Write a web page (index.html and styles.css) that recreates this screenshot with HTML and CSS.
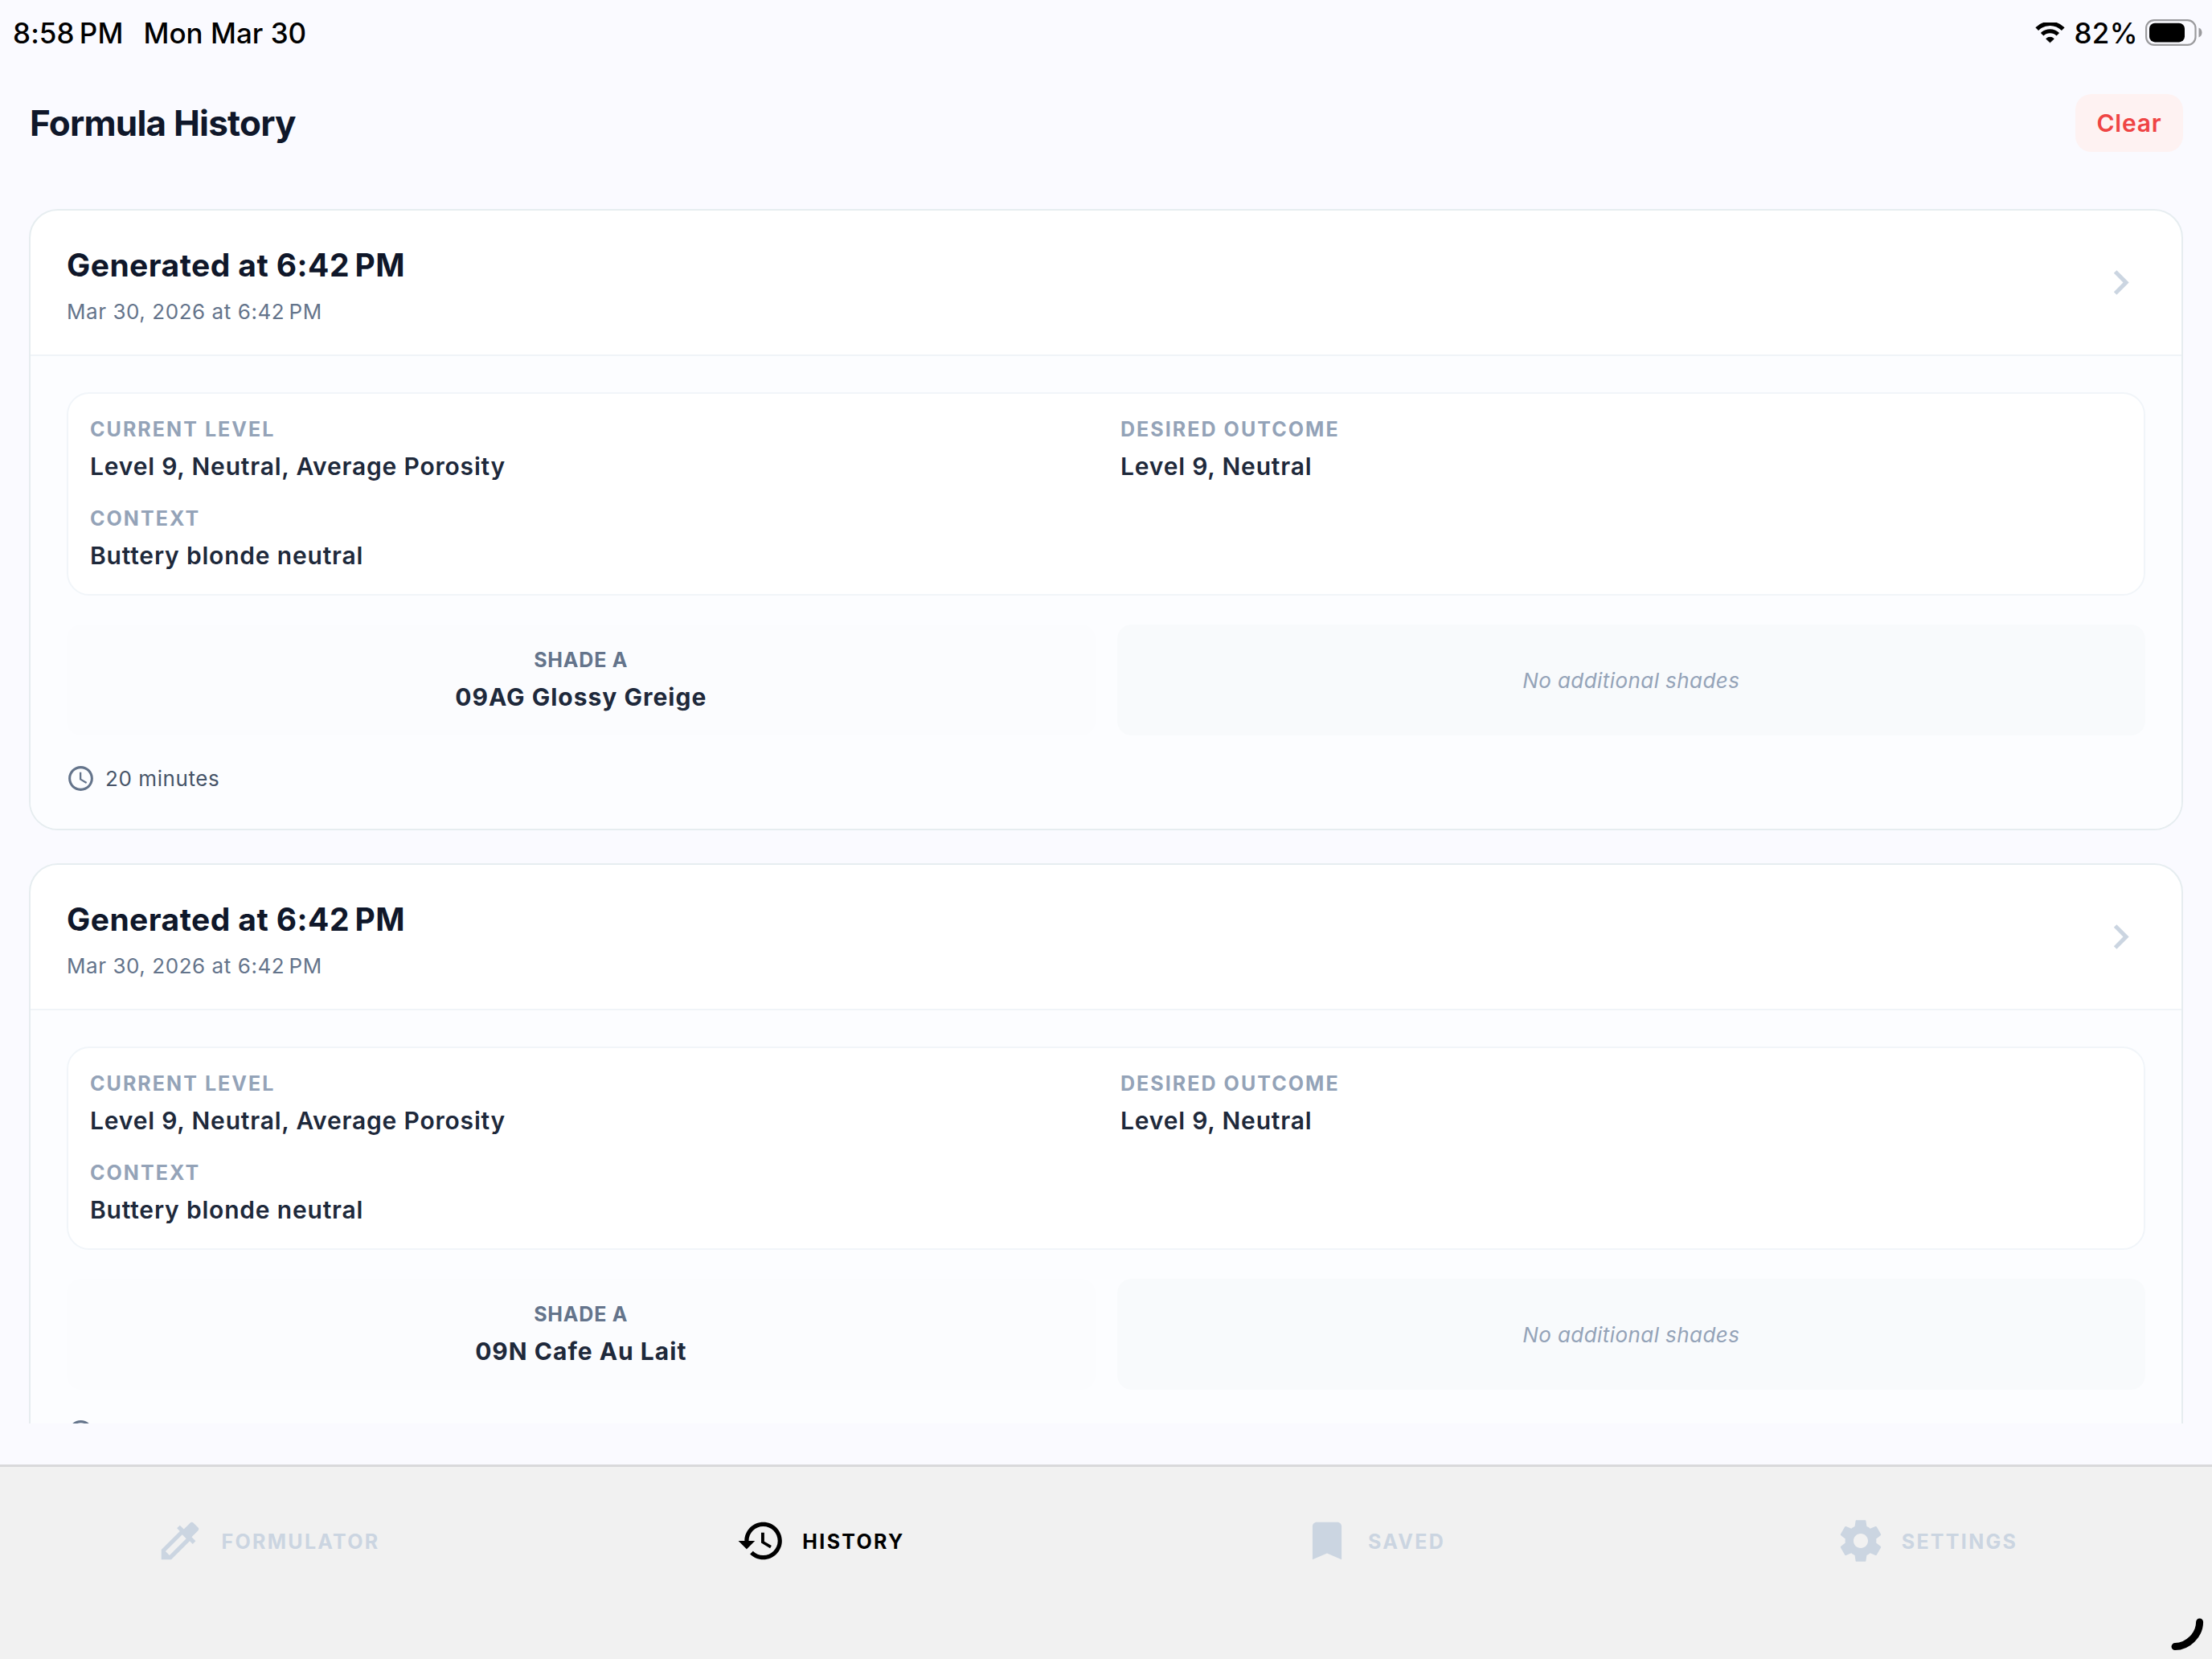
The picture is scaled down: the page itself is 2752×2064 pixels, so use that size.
FILE: index.html
```html
<!DOCTYPE html>
<html lang="en">
  <head>
    <meta charset="UTF-8" />
    <meta name="viewport" content="width=device-width, initial-scale=1.0" />
    <title>Formula History</title>
    <link rel="stylesheet" href="styles.css">
  </head>
  <body>
    <div class="status-bar">
      <div class="status-left">
        <span class="time">8:58&#8239;PM</span>
        <span>Mon Mar 30</span>
      </div>
      <div class="status-right">
        <svg class="wifi" viewBox="0 0 38 26">
          <path d="M2.2 8.1A23 23 0 0 1 34.8 8.1" fill="none" stroke="#000" stroke-width="5.2" />
          <path d="M8.7 14.8A14 14 0 0 1 28.3 14.8" fill="none" stroke="#000" stroke-width="5" />
          <path d="M18.5 24.8L13.7 20.3A6.8 6.8 0 0 1 23.3 20.3Z" stroke="#000" stroke-width="1" stroke-linejoin="round" />
        </svg>
        <span class="percent">82%</span>
        <svg class="battery" viewBox="0 0 71 33">
          <rect x="1.1" y="1.1" width="61.4" height="30.8" rx="10" fill="none" stroke="#9a9a9d" stroke-width="2.2" />
          <rect x="5" y="4.8" width="44" height="23.6" rx="7" />
          <path d="M66.5 10.5c2.6 1 4 3.2 4 6s-1.4 5-4 6z" fill="#9a9a9d" />
        </svg>
      </div>
    </div>

    <header class="page-header">
      <h1>Formula History</h1>
      <button class="clear-btn">Clear</button>
    </header>

    <main class="history-list">
      <section class="card">
        <div class="card-head">
          <div>
            <h2>Generated at 6:42&#8239;PM</h2>
            <p class="date">Mar 30, 2026 at 6:42&#8239;PM</p>
          </div>
          <svg class="chevron" viewBox="0 0 24 24"><path d="M10 6L8.59 7.41 13.17 12l-4.58 4.59L10 18l6-6z" /></svg>
        </div>
        <div class="card-body">
          <div class="info-box">
            <div>
              <div class="label">CURRENT LEVEL</div>
              <div class="value">Level 9, Neutral, Average Porosity</div>
            </div>
            <div>
              <div class="label">DESIRED OUTCOME</div>
              <div class="value">Level 9, Neutral</div>
            </div>
            <div>
              <div class="label">CONTEXT</div>
              <div class="value">Buttery blonde neutral</div>
            </div>
          </div>
          <div class="shades">
            <div class="shade">
              <div class="shade-label">SHADE A</div>
              <div class="shade-name">09AG Glossy Greige</div>
            </div>
            <div class="shade empty">No additional shades</div>
          </div>
          <div class="duration">
            <svg viewBox="0 0 24 24"><path d="M11.99 2C6.47 2 2 6.48 2 12s4.47 10 9.99 10C17.52 22 22 17.52 22 12S17.52 2 11.99 2zM12 20c-4.42 0-8-3.58-8-8s3.58-8 8-8 8 3.58 8 8-3.58 8-8 8zm.5-13H11v6l5.25 3.15.75-1.23-4.5-2.67z" /></svg>
            <span>20 minutes</span>
          </div>
        </div>
      </section>

      <section class="card">
        <div class="card-head">
          <div>
            <h2>Generated at 6:42&#8239;PM</h2>
            <p class="date">Mar 30, 2026 at 6:42&#8239;PM</p>
          </div>
          <svg class="chevron" viewBox="0 0 24 24"><path d="M10 6L8.59 7.41 13.17 12l-4.58 4.59L10 18l6-6z" /></svg>
        </div>
        <div class="card-body">
          <div class="info-box">
            <div>
              <div class="label">CURRENT LEVEL</div>
              <div class="value">Level 9, Neutral, Average Porosity</div>
            </div>
            <div>
              <div class="label">DESIRED OUTCOME</div>
              <div class="value">Level 9, Neutral</div>
            </div>
            <div>
              <div class="label">CONTEXT</div>
              <div class="value">Buttery blonde neutral</div>
            </div>
          </div>
          <div class="shades">
            <div class="shade">
              <div class="shade-label">SHADE A</div>
              <div class="shade-name">09N Cafe Au Lait</div>
            </div>
            <div class="shade empty">No additional shades</div>
          </div>
          <div class="duration">
            <svg viewBox="0 0 24 24"><path d="M11.99 2C6.47 2 2 6.48 2 12s4.47 10 9.99 10C17.52 22 22 17.52 22 12S17.52 2 11.99 2zM12 20c-4.42 0-8-3.58-8-8s3.58-8 8-8 8 3.58 8 8-3.58 8-8 8zm.5-13H11v6l5.25 3.15.75-1.23-4.5-2.67z" /></svg>
          </div>
        </div>
      </section>
    </main>

    <nav class="tab-bar">
      <a class="tab">
        <svg viewBox="0 0 24 24"><path d="M20.71 5.63l-2.34-2.34c-.39-.39-1.02-.39-1.41 0l-3.12 3.12-1.93-1.91-1.41 1.41 1.42 1.42L3 16.25V21h4.75l8.92-8.92 1.42 1.42 1.41-1.41-1.92-1.92 3.12-3.12c.4-.4.4-1.03.01-1.42zM6.92 19L5 17.08l8.06-8.06 1.92 1.92L6.92 19z" /></svg>
        <span>FORMULATOR</span>
      </a>
      <a class="tab active">
        <svg viewBox="0 0 24 24"><path d="M13 3c-4.97 0-9 4.03-9 9H1l3.89 3.89.07.14L9 12H6c0-3.87 3.13-7 7-7s7 3.13 7 7-3.13 7-7 7c-1.93 0-3.68-.79-4.94-2.06l-1.42 1.42C8.27 19.99 10.51 21 13 21c4.97 0 9-4.03 9-9s-4.03-9-9-9zm-1 5v5l4.28 2.54.72-1.21-3.5-2.08V8H12z" /></svg>
        <span>HISTORY</span>
      </a>
      <a class="tab">
        <svg viewBox="0 0 24 24"><path d="M17 3H7c-1.1 0-1.99.9-1.99 2L5 21l7-3 7 3V5c0-1.1-.9-2-2-2z" /></svg>
        <span>SAVED</span>
      </a>
      <a class="tab">
        <svg viewBox="0 0 24 24"><path d="M19.43 12.98c.04-.32.07-.64.07-.98s-.03-.66-.07-.98l2.11-1.65c.19-.15.24-.42.12-.64l-2-3.46c-.12-.22-.39-.3-.61-.22l-2.49 1c-.52-.4-1.08-.73-1.69-.98l-.38-2.65C14.46 2.18 14.25 2 14 2h-4c-.25 0-.46.18-.49.42l-.38 2.65c-.61.25-1.17.59-1.69.98l-2.49-1c-.23-.09-.49 0-.61.22l-2 3.46c-.13.22-.07.49.12.64l2.11 1.65c-.04.32-.07.65-.07.98s.03.66.07.98l-2.11 1.65c-.19.15-.24.42-.12.64l2 3.46c.12.22.39.3.61.22l2.49-1c.52.4 1.08.73 1.69.98l.38 2.65c.03.24.24.42.49.42h4c.25 0 .46-.18.49-.42l.38-2.65c.61-.25 1.17-.59 1.69-.98l2.49 1c.23.09.49 0 .61-.22l2-3.46c.12-.22.07-.49-.12-.64l-2.11-1.65zM12 15.5c-1.93 0-3.5-1.57-3.5-3.5s1.57-3.5 3.5-3.5 3.5 1.57 3.5 3.5-1.57 3.5-3.5 3.5z" /></svg>
        <span>SETTINGS</span>
      </a>
      <!-- screen corner handle -->
      <svg class="corner" viewBox="0 0 42 42"><path d="M36.6 6C36.6 22 22 36.6 6 36.6" /></svg>
    </nav>
  </body>
</html>
```

FILE: styles.css
```css
* {
  box-sizing: border-box;
}

body {
  font-family: Inter, sans-serif;
  background-color: #fafaff;
  margin: 0;
  height: 2064px;
  display: flex;
  flex-direction: column;
  overflow: hidden;
}

h1,
h2,
p {
  margin: 0;
}

svg {
  display: block;
  flex-shrink: 0;
}

/* status bar */
.status-bar {
  display: flex;
  justify-content: space-between;
  align-items: center;
  height: 81px;
  padding: 0 12px 0 16px;
  font-size: 35px;
  font-weight: 500;
  color: #000;
}

.status-left,
.status-right {
  display: flex;
  align-items: center;
}

.time {
  margin-right: 25px;
  letter-spacing: 0.1px;
}

.wifi {
  width: 38px;
  height: 26px;
}

.percent {
  margin: 0 9px 0 10px;
  letter-spacing: 0.4px;
}

.battery {
  width: 71px;
  height: 33px;
}

/* page header */
.page-header {
  display: flex;
  justify-content: space-between;
  align-items: center;
  height: 143px;
  padding: 0 36px 0 37px;
}

.page-header h1 {
  font-size: 44px;
  font-weight: 700;
  letter-spacing: -0.78px;
  color: #0f172a;
}

.clear-btn {
  width: 134px;
  height: 72px;
  padding: 0;
  border: none;
  border-radius: 20px;
  background: #fef2f2;
  color: #ef4444;
  font-family: inherit;
  font-size: 30px;
  font-weight: 600;
  letter-spacing: 0.8px;
}

/* history cards */
.history-list {
  height: 1547px;
  padding: 36px 36px 0;
  overflow: hidden;
}

.card {
  height: 773px;
  margin-bottom: 41px;
  border: 2px solid #e6edf0;
  border-radius: 36px;
  background: #fff;
  overflow: hidden;
}

.card-head {
  display: flex;
  justify-content: space-between;
  align-items: center;
  height: 181px;
  padding: 0 45px;
  border-bottom: 2px solid #f0f4f8;
}

.card-head h2 {
  padding-top: 2px;
  font-size: 39px;
  line-height: 60px;
  font-weight: 700;
  letter-spacing: 0.44px;
  color: #0f172a;
}

.date {
  margin-top: 11px;
  font-size: 26px;
  line-height: 34px;
  letter-spacing: 0.56px;
  color: #64748b;
}

.chevron {
  width: 61px;
  height: 61px;
  fill: #cbd5e1;
}

.card-body {
  height: 100%;
  padding: 45px;
  background: #fcfdff;
}

.info-box {
  display: grid;
  grid-template-columns: 1fr 1fr;
  column-gap: 35px;
  row-gap: 27px;
  padding: 26px 26px 28px 27px;
  border: 2px solid #f1f5f9;
  border-radius: 28px;
  background: #fff;
}

.label,
.shade-label {
  font-size: 25px;
  line-height: 36px;
  font-weight: 700;
  letter-spacing: 2.05px;
  color: #94a3b8;
}

.value {
  margin-top: 8px;
  font-size: 30px;
  line-height: 40px;
  font-weight: 600;
  letter-spacing: 0.81px;
  color: #1e293b;
}

.shades {
  display: grid;
  grid-template-columns: 1fr 1fr;
  gap: 27px;
  margin-top: 36px;
}

.shade {
  height: 138px;
  padding-top: 26px;
  border-radius: 18px;
  background: #fbfcfe;
  text-align: center;
}

.shade-label {
  letter-spacing: 0.8px;
  color: #64748b;
}

.shade-name {
  margin-top: 8px;
  font-size: 30px;
  line-height: 40px;
  font-weight: 700;
  letter-spacing: 1px;
  color: #1e293b;
}

.shade.empty {
  display: flex;
  justify-content: center;
  align-items: center;
  padding: 0;
  background: #f8fafc;
  font-size: 26px;
  font-style: italic;
  letter-spacing: 0.42px;
  color: #94a3b8;
}

.duration {
  display: flex;
  align-items: center;
  gap: 12px;
  height: 37px;
  margin: 35px 0 0 -1px;
  font-size: 26px;
  letter-spacing: 0.58px;
  color: #475569;
}

.duration svg {
  width: 37px;
  height: 37px;
  fill: #64748b;
}

/* bottom tabs */
.tab-bar {
  position: relative;
  display: grid;
  grid-template-columns: repeat(4, 1fr);
  height: 242px;
  margin-top: auto;
  padding-bottom: 56px;
  border-top: 3px solid #d9d9db;
  background: #f1f1f1;
}

.tab {
  display: flex;
  justify-content: center;
  align-items: center;
  gap: 20px;
  padding-right: 22px;
  font-size: 25px;
  font-weight: 700;
  letter-spacing: 2.3px;
  color: #cbd5e1;
}

.tab svg {
  width: 62px;
  height: 62px;
  fill: currentColor;
}

.tab span {
  padding-top: 2px;
}

.tab.active {
  color: #000;
}

.corner {
  position: absolute;
  right: 10px;
  bottom: 10px;
  width: 42px;
  height: 42px;
  fill: none;
  stroke: #000;
  stroke-width: 9;
  stroke-linecap: round;
}
```
